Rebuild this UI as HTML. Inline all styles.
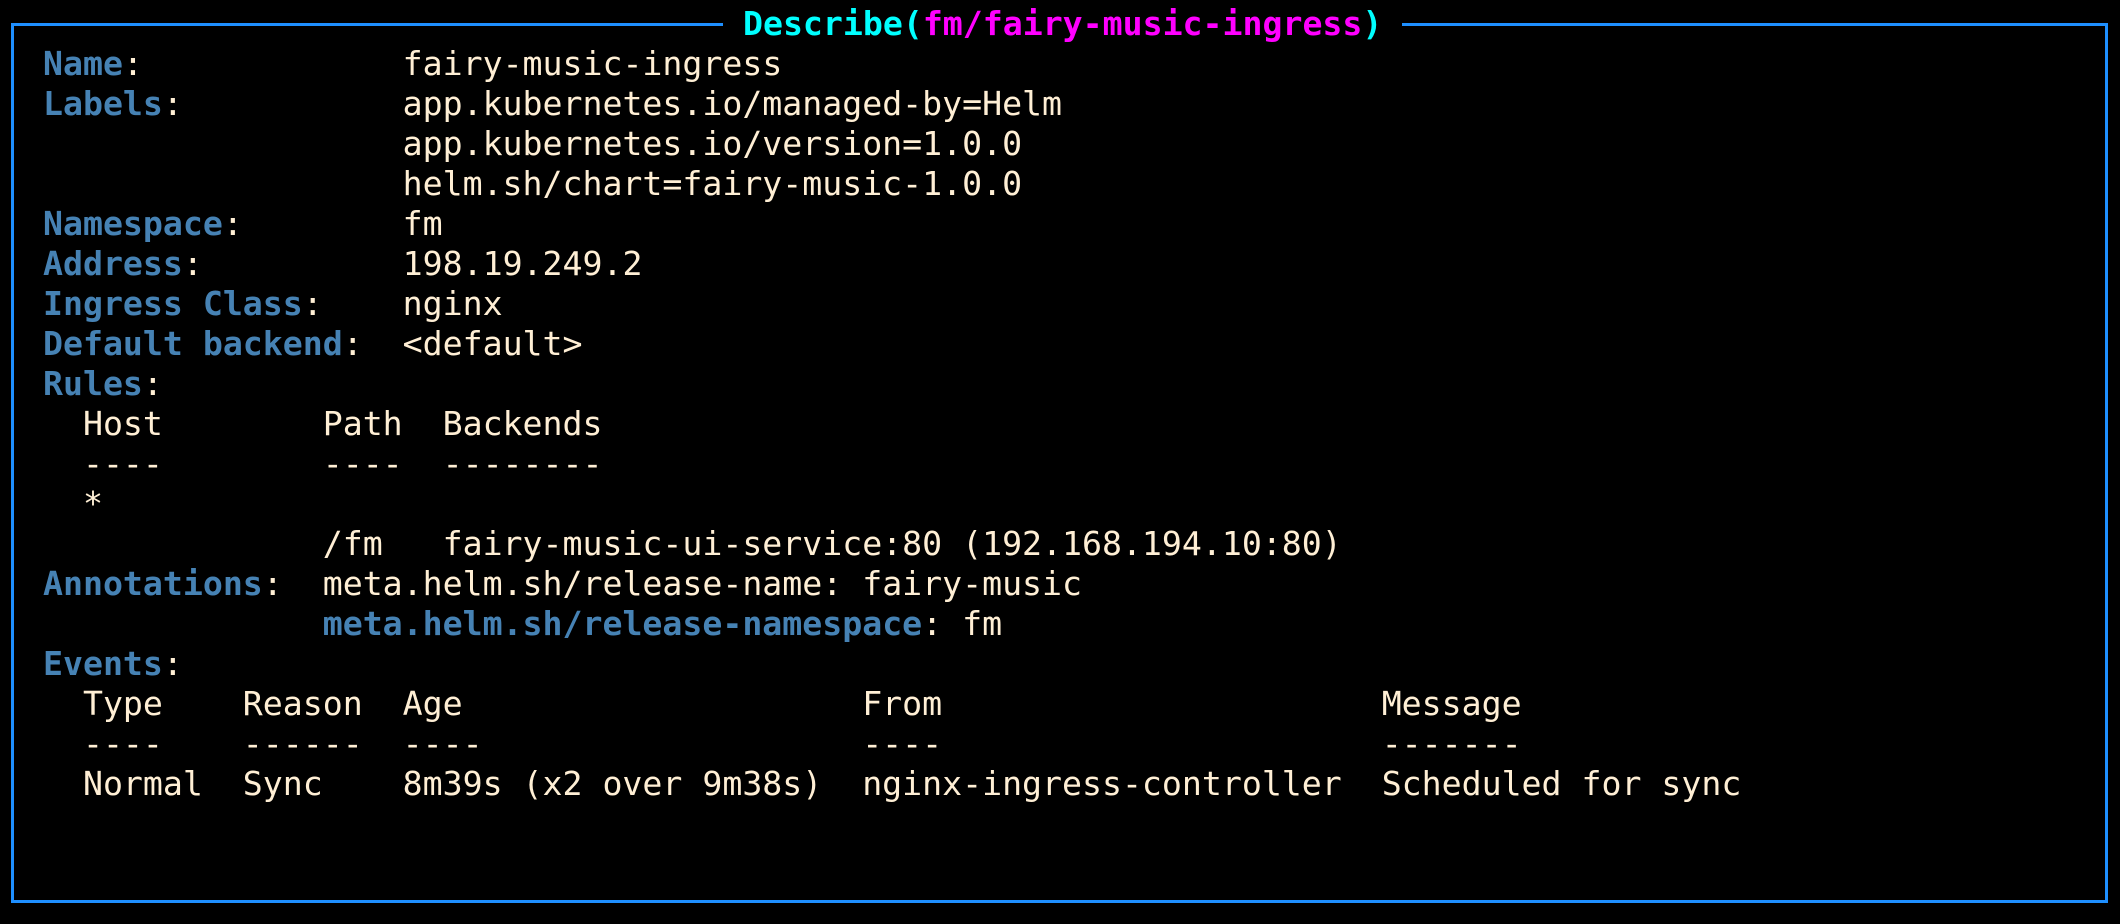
<!DOCTYPE html>
<html><head><style>
html,body{margin:0;padding:0;background:#000;width:2120px;height:924px;overflow:hidden}
.box{position:absolute;left:11px;top:23px;width:2091px;height:874px;border:3px solid #1e8fff}
.title{position:absolute;left:723px;top:2px;background:#000;font:bold 33.2px "DejaVu Sans Mono",monospace;line-height:44px;white-space:pre;color:#00ffff}
.m{color:#ff00ff}
pre{position:absolute;left:43px;top:44px;margin:0;font:33.2px "DejaVu Sans Mono","Liberation Mono",monospace;line-height:40px;color:#ffefd5}
b{color:#4682b4;font-weight:bold}
</style></head><body>
<div class="box"></div>
<div class="title"> Describe(<span class="m">fm/fairy-music-ingress</span>) </div>
<pre><b>Name</b>:             fairy-music-ingress
<b>Labels</b>:           app.kubernetes.io/managed-by=Helm
                  app.kubernetes.io/version=1.0.0
                  helm.sh/chart=fairy-music-1.0.0
<b>Namespace</b>:        fm
<b>Address</b>:          198.19.249.2
<b>Ingress Class</b>:    nginx
<b>Default backend</b>:  &lt;default&gt;
<b>Rules</b>:
  Host        Path  Backends
  ----        ----  --------
  *
              /fm   fairy-music-ui-service:80 (192.168.194.10:80)
<b>Annotations</b>:  meta.helm.sh/release-name: fairy-music
              <b>meta.helm.sh/release-namespace</b>: fm
<b>Events</b>:
  Type    Reason  Age                    From                      Message
  ----    ------  ----                   ----                      -------
  Normal  Sync    8m39s (x2 over 9m38s)  nginx-ingress-controller  Scheduled for sync
</pre>
</body></html>
